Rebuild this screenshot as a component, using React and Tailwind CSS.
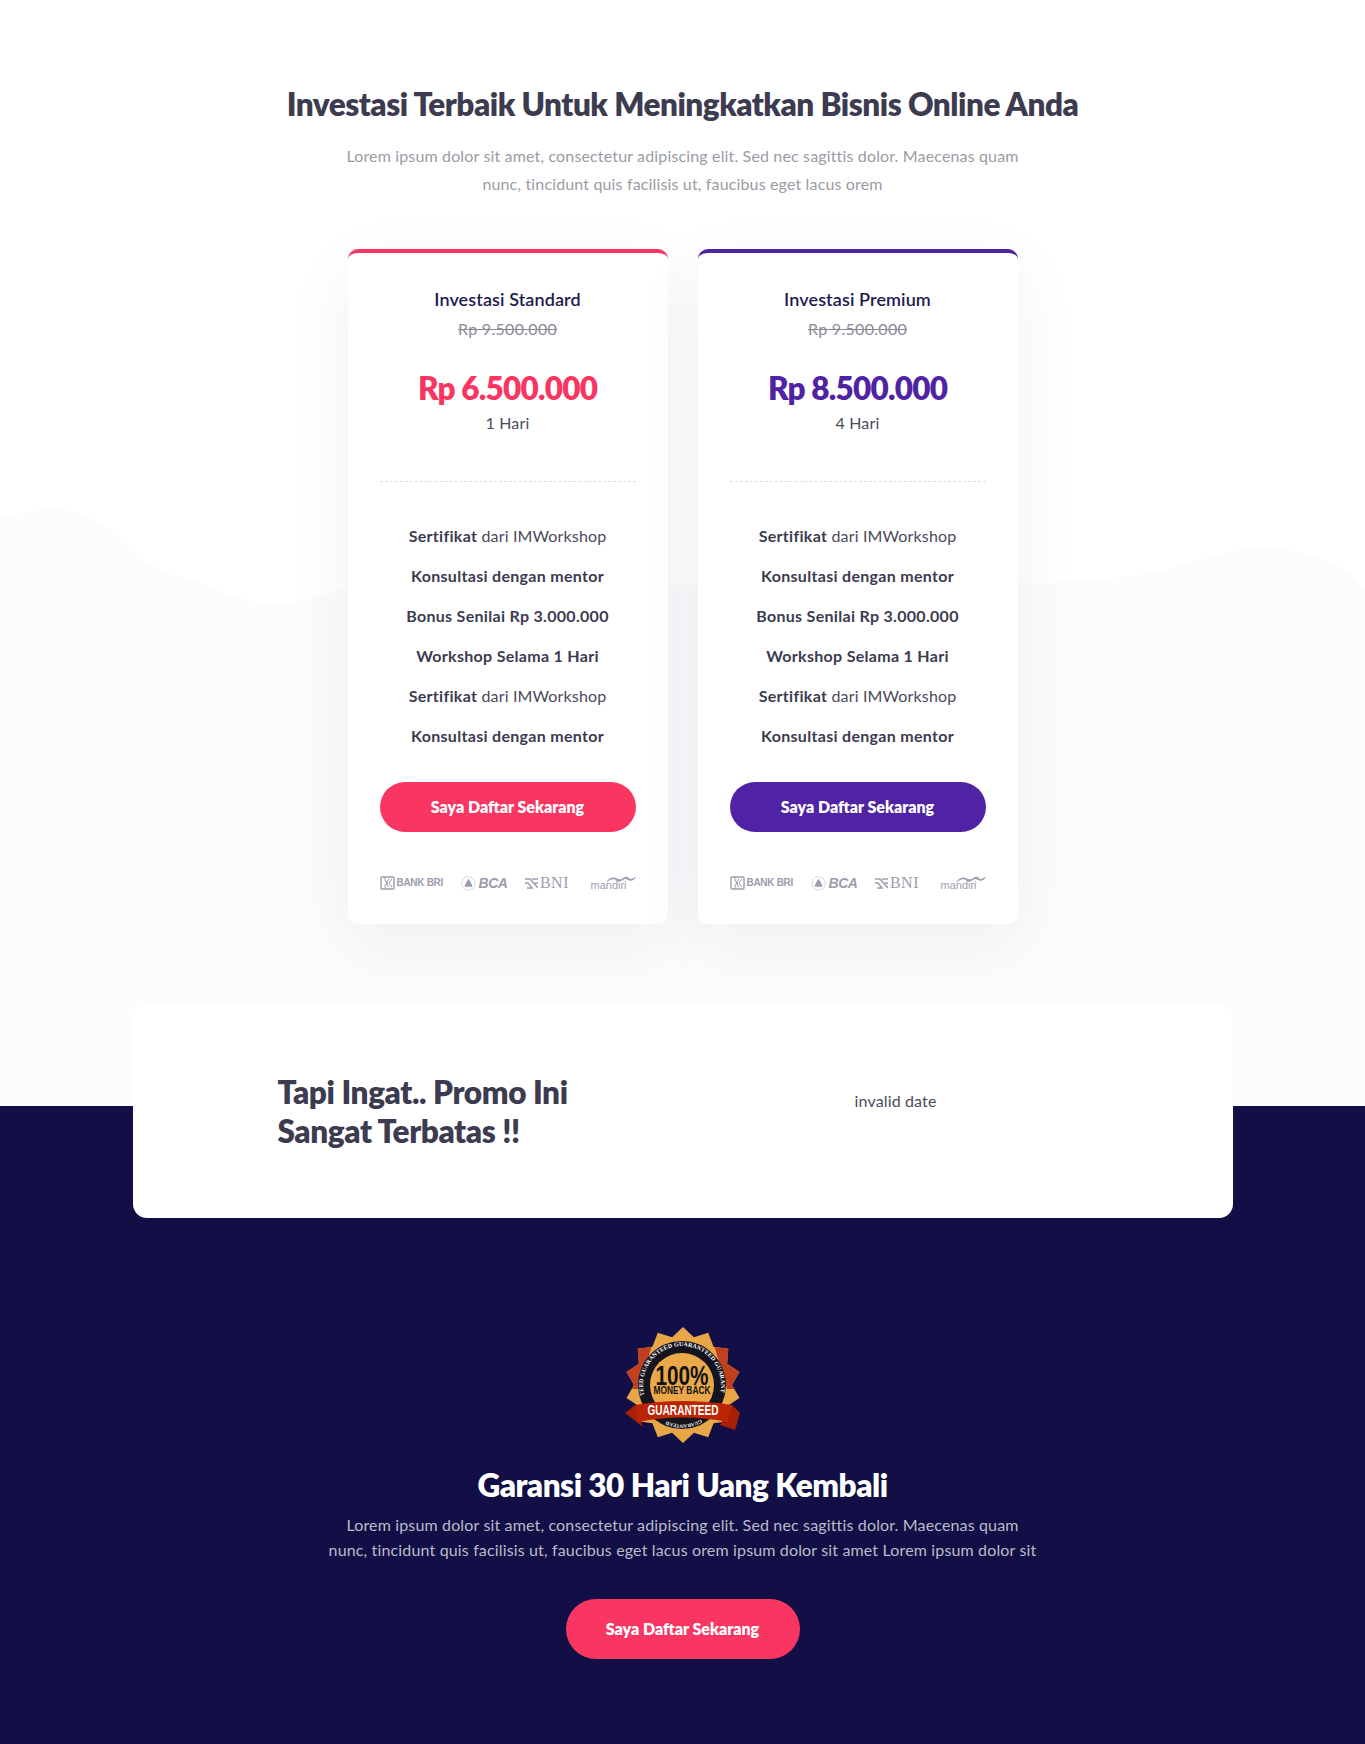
import React from "react";

const features = [
  { bold: "Sertifikat", rest: " dari IMWorkshop" },
  { bold: "Konsultasi dengan mentor", rest: "" },
  { bold: "Bonus Senilai Rp 3.000.000", rest: "" },
  { bold: "Workshop Selama 1 Hari", rest: "" },
  { bold: "Sertifikat", rest: " dari IMWorkshop" },
  { bold: "Konsultasi dengan mentor", rest: "" },
];

const BankLogos = () => (
  <div className="flex items-center justify-between h-5 text-[#9d9cad]">
    <div className="flex items-center gap-[2px]">
      <svg width="15" height="14" viewBox="0 0 15 14" fill="none" stroke="currentColor" strokeWidth="1.4">
        <rect x="1" y="1" width="13" height="12" rx="1" />
        <path d="M5 1v4l3 2-3 2v4M9 3L6 7l3 4M12 3L9 7l3 4" strokeWidth="1" />
      </svg>
      <span className="font-['Liberation_Sans',sans-serif] text-[10px] font-bold tracking-[-0.3px] leading-none">BANK BRI</span>
    </div>
    <div className="flex items-center gap-[3px] -ml-[4px]">
      <svg width="15" height="15" viewBox="0 0 14 14">
        <circle cx="7" cy="7" r="6.3" fill="none" stroke="#cfe3f0" strokeWidth="1" />
        <path d="M7 2.500l2 3 1.500 3.500v1H3.500v-1L5 5.500z" fill="currentColor" />
      </svg>
      <span className="font-['Liberation_Sans',sans-serif] text-[14px] font-bold italic tracking-[-0.5px] leading-none">BCA</span>
    </div>
    <div className="flex items-center gap-[2px] -ml-[4px]">
      <svg width="13" height="11" viewBox="0 0 13 11" fill="none" stroke="currentColor" strokeWidth="1.500">
        <path d="M0 1h5l8 9M0 5h3l4 5H2M13 1H7M13 5h-3" />
      </svg>
      <span className="font-['Liberation_Serif',serif] text-[16px] tracking-[0.5px] leading-none">BNI</span>
    </div>
    <div className="relative w-[45px] h-[14px]">
      <span className="absolute left-0 bottom-[-1px] font-['Liberation_Sans',sans-serif] text-[11px] leading-none">mandiri</span>
      <svg className="absolute right-0 top-[-1px]" width="30" height="9" viewBox="0 0 30 8" fill="currentColor">
        <path d="M0 7C3 2 7 1 11 3c3 1.500 4 1 7-1 2-1 4-1 5 1 2 1 4 0 7-2-1 3-4 5-7 4-3-2-5-2-7 0-3 2-5 1-7-1C7 3 4 4 0 7z" />
      </svg>
    </div>
  </div>
);

const PriceCard = ({ title, price, days, accent }) => {
  const isRed = accent === "red";
  return (
    <div
      className={`w-[320px] h-[675px] bg-white rounded-[10px] border-t-4 px-8 shadow-[0_20px_70px_rgba(20,30,80,0.06)] ${
        isRed ? "border-[#f93662]" : "border-[#4f23a3]"
      }`}
    >
      <div className="flex flex-col items-center pt-[33px]">
        <h3 className="font-semibold text-[18px] tracking-[0.1px] leading-[26px] text-[#1e1b4f]">{title}</h3>
        <p className="text-[16px] tracking-[0.3px] leading-6 mt-[5px] text-[#8b8a99] line-through">Rp 9.500.000</p>
        <p className={`font-extrabold text-[31.5px] tracking-[-0.8px] leading-[40px] mt-[27px] ${isRed ? "text-[#f93662]" : "text-[#4f23a3]"}`}>
          {price}
        </p>
        <p className="text-[16px] tracking-[0.2px] leading-6 mt-[3px] text-[#4a4a5c]">{days}</p>
      </div>
      <div className="border-t border-dashed border-[#cfe5ee] mt-[46px]" />
      <ul className="mt-[34px] flex flex-col">
        {features.map((f, i) => (
          <li key={i} className="h-10 flex items-center justify-center text-[16px] tracking-[0.15px] text-[#4a4a5c]">
            <span className="whitespace-pre">
              <b className="font-bold tracking-[0.3px] text-[#3c3b50]">{f.bold}</b>
              {f.rest}
            </span>
          </li>
        ))}
      </ul>
      <button className={`w-full h-[50px] mt-[26px] rounded-full text-white font-extrabold text-[16px] ${isRed ? "bg-[#f93662]" : "bg-[#4f23a3]"}`}>
        Saya Daftar Sekarang
      </button>
      <div className="mt-[41px]">
        <BankLogos />
      </div>
    </div>
  );
};

// 14 pointed seal around the badge
const sealPoints = () => {
  const pts = [];
  for (let i = 0; i < 28; i++) {
    const r = i % 2 === 0 ? 58 : 49;
    const a = (i * Math.PI) / 14 - Math.PI / 2;
    pts.push(`${(58 + r * Math.cos(a)).toFixed(1)},${(58 + r * Math.sin(a)).toFixed(1)}`);
  }
  return pts.join(" ");
};

const Badge = () => (
  <svg width="116" height="116" viewBox="0 0 116 116">
    <defs>
      <clipPath id="seal-clip">
        <polygon points={sealPoints()} />
      </clipPath>
    </defs>
    <polygon points={sealPoints()} fill="#e9a646" />
    <g clipPath="url(#seal-clip)">
      <path d="M30 8L0 12V62H14zM86 8L116 12V62H102z" fill="#c0401e" />
    </g>
    <circle cx="57" cy="58" r="44" fill="#14141f" />
    <circle cx="57" cy="58" r="32" fill="#eaa849" />
    <path id="badge-arc" d="M19.4 68.4A39 39 0 1 1 94.6 68.4" fill="none" />
    <path id="badge-arc-low" d="M76 92.500A39 39 0 0 1 38 92.500" fill="none" />
    <text fontFamily="Liberation Serif, serif" fontSize="6" fontWeight="700" fill="#fff">
      <textPath href="#badge-arc" textLength="140" lengthAdjust="spacing">
        TEED GUARANTEED GUARANTEED GUARANT
      </textPath>
    </text>
    <text fontFamily="Liberation Serif, serif" fontSize="5" fontWeight="700" fill="#fff">
      <textPath href="#badge-arc-low">GUARANTEED</textPath>
    </text>
    <text x="57" y="58" textAnchor="middle" textLength="53" lengthAdjust="spacingAndGlyphs" fontFamily="Liberation Sans, sans-serif" fontWeight="700" fontSize="28" fill="#111">
      100%
    </text>
    <text x="57" y="67" textAnchor="middle" textLength="57" lengthAdjust="spacingAndGlyphs" fontFamily="Liberation Sans, sans-serif" fontWeight="700" fontSize="10" fill="#111">
      MONEY BACK
    </text>
    <path d="M0 86L10 78 18 100zM115 86L107 78 95 98 110 103z" fill="#a81f05" />
    <path d="M10 78Q57 70 107 78L103 95Q57 86 13 95z" fill="#bb2505" />
    <text x="58" y="88" textAnchor="middle" textLength="71" lengthAdjust="spacingAndGlyphs" fontFamily="Liberation Sans, sans-serif" fontWeight="700" fontSize="14" fill="#fff">
      GUARANTEED
    </text>
  </svg>
);

export default function App() {
  return (
    <div className="font-['Lato',sans-serif] bg-[#110f45]">
      <section className="relative bg-white h-[1106px]">
        {/* wave behind the cards */}
        <svg className="absolute left-0 bottom-0 w-full h-[606px]" viewBox="0 0 1365 606" preserveAspectRatio="none">
          <path
            d="M0 17C20 14 35 10 55 9 80 10 95 18 110 30 118 36 125 45 133 53 150 68 175 76 200 83 220 92 240 100 260 103 290 106 320 98 345 87L1018 83C1040 83 1060 83 1080 80 1110 78 1140 76 1165 70 1195 60 1230 50 1260 48 1290 48 1320 56 1340 67 1350 74 1358 82 1365 90V606H0Z"
            fill="#fbfcfc"
          />
        </svg>

        <div className="relative flex flex-col items-center pt-[83px]">
          <h2 className="font-extrabold text-[31.5px] tracking-[-0.5px] leading-[42px] text-[#3c3b50]">
            Investasi Terbaik Untuk Meningkatkan Bisnis Online Anda
          </h2>
          <p className="mt-[17px] w-[700px] text-center text-[16px] tracking-[0.15px] leading-7 text-[#9b9ba5]">
            Lorem ipsum dolor sit amet, consectetur adipiscing elit. Sed nec sagittis dolor. Maecenas quam
            <br />
            nunc, tincidunt quis facilisis ut, faucibus eget lacus orem
          </p>
          <div className="mt-[51px] flex justify-center gap-[30px]">
            <PriceCard title="Investasi Standard" price="Rp 6.500.000" days="1 Hari" accent="red" />
            <PriceCard title="Investasi Premium" price="Rp 8.500.000" days="4 Hari" accent="purple" />
          </div>
        </div>
      </section>

      <section className="flex flex-col items-center pb-[87px]">
        <div className="w-[1100px] h-[214px] -mt-[102px] relative bg-white rounded-[14px] flex items-start pl-[145px]">
          <h2 className="w-[577px] mt-[69px] font-extrabold text-[31.5px] tracking-[-0.4px] leading-[39px] text-[#3c3b50]">
            Tapi Ingat.. Promo Ini
            <br />
            Sangat Terbatas !!
          </h2>
          <p className="mt-[85px] text-[16px] tracking-[0.15px] leading-6 text-[#4a4a5c]">invalid date</p>
        </div>

        <div className="mt-[109px]">
          <Badge />
        </div>
        <h2 className="mt-[22px] font-extrabold text-[31.5px] tracking-[-0.5px] leading-[40px] text-white">
          Garansi 30 Hari Uang Kembali
        </h2>
        <p className="mt-[7px] text-center text-[16px] tracking-[0.15px] leading-[25px] text-[#bcbbca]">
          Lorem ipsum dolor sit amet, consectetur adipiscing elit. Sed nec sagittis dolor. Maecenas quam
          <br />
          nunc, tincidunt quis facilisis ut, faucibus eget lacus orem ipsum dolor sit amet Lorem ipsum dolor sit
        </p>
        <button className="mt-[37px] w-[234px] h-[60px] rounded-full bg-[#f93662] text-white font-extrabold text-[16px]">
          Saya Daftar Sekarang
        </button>
      </section>
    </div>
  );
}
